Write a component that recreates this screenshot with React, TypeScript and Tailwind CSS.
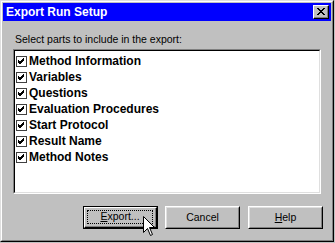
import { useState } from 'react';

const parts = [
  'Method Information',
  'Variables',
  'Questions',
  'Evaluation Procedures',
  'Start Protocol',
  'Result Name',
  'Method Notes',
];

const CheckMark = () => (
  <svg width="9" height="9" viewBox="0 0 9 9" className="block">
    <path d="M1 4 L3 6 L7 2 M1 5 L3 7 L7 3 M1 3 L3 5 L7 1" stroke="#000" strokeWidth="1" fill="none" shapeRendering="crispEdges" />
  </svg>
);

const Cursor = () => (
  <svg width="13" height="21" viewBox="0 0 13 21" className="absolute left-[143px] top-[216px]">
    <path d="M0.5 0.5 L0.5 16.5 L4.5 12.5 L7.5 19.5 L9.5 18.5 L6.5 11.5 L11.5 11.5 Z" fill="#fff" stroke="#000" strokeWidth="1" />
  </svg>
);

const Button = ({ label, hotkey, isDefault }: { label: string; hotkey?: number; isDefault?: boolean }) => {
  const text =
    hotkey === undefined ? (
      <span>{label}</span>
    ) : (
      <span>
        {label.slice(0, hotkey)}
        <span className="underline underline-offset-[1px]">{label.charAt(hotkey)}</span>
        {label.slice(hotkey + 1)}
      </span>
    );
  if (isDefault) {
    return (
      <div className="w-[75px] h-[23px] border border-black">
        <div className="h-full border-t border-l border-white border-b border-r border-b-black border-r-black">
          <div className="h-full border-b border-r border-[#808080] border-t-0 border-l-0 flex items-center justify-center p-[2px]">
            <div className="w-full h-full border border-dotted border-black flex items-center justify-center">
              {text}
            </div>
          </div>
        </div>
      </div>
    );
  }
  return (
    <div className="w-[75px] h-[23px] border-t border-l border-white border-b border-r border-b-black border-r-black">
      <div className="h-full border-t border-l border-[#dfdfdf] border-b border-r border-b-[#808080] border-r-[#808080] flex items-center justify-center">
        {text}
      </div>
    </div>
  );
};

export default function App() {
  const [checked] = useState(parts.map(() => true));

  return (
    <div
      className="relative w-[335px] h-[243px] bg-[#c0c0c0] text-black"
      style={{ fontFamily: '"Liberation Sans", Arial, sans-serif' }}
    >
      <div className="w-[334px] h-[242px] border-t border-l border-[#dfdfdf] border-b border-r border-b-black border-r-black">
        <div className="h-full border-t border-l border-white border-b border-r border-b-[#808080] border-r-[#808080] p-[1px] flex flex-col">
          {/* title bar */}
          <div className="h-[18px] bg-[#0000ff] flex items-center justify-between pl-[3px] pr-[2px]">
            <span className="text-white font-bold text-[12px] leading-none">Export Run Setup</span>
            <div className="w-[16px] h-[14px] bg-[#c0c0c0] border-t border-l border-white border-b border-r border-b-black border-r-black">
              <div className="h-full border-b border-r border-[#808080] border-t-0 border-l-0 flex items-center justify-center">
                <svg width="8" height="7" viewBox="0 0 8 7" className="block">
                  <path d="M0 0h2v1H0zM6 0h2v1H6zM1 1h2v1H1zM5 1h2v1H5zM2 2h4v1H2zM3 3h2v1H3zM2 4h4v1H2zM1 5h2v1H1zM5 5h2v1H5zM0 6h2v1H0zM6 6h2v1H6z" fill="#000" />
                </svg>
              </div>
            </div>
          </div>

          {/* body */}
          <div className="flex flex-col pl-[10px] text-[10.5px]">
            <div className="mt-[12px] ml-[2px] leading-[12px]">Select parts to include in the export:</div>

            <div className="mt-[4px] w-[308px] h-[145px] border-t border-l border-[#808080] border-b border-r border-b-white border-r-white">
              <div className="h-full border-t border-l border-black border-b border-r border-b-[#dfdfdf] border-r-[#dfdfdf] bg-white pt-[2px]">
                {parts.map((p, i) => (
                  <div key={p} className="h-[16px] flex items-center gap-[2px] pl-[1px]">
                    <div className="w-[11px] h-[11px] border border-[#404040] bg-white flex items-center justify-center">
                      {checked[i] && <CheckMark />}
                    </div>
                    <span className="font-bold text-[12px] leading-none">{p}</span>
                  </div>
                ))}
              </div>
            </div>

            <div className="mt-[12px] ml-[70px] flex">
              <Button label="Export..." hotkey={0} isDefault />
              <div className="ml-[7px]">
                <Button label="Cancel" />
              </div>
              <div className="ml-[8px]">
                <Button label="Help" hotkey={0} />
              </div>
            </div>
          </div>
        </div>
      </div>
      <Cursor />
    </div>
  );
}
